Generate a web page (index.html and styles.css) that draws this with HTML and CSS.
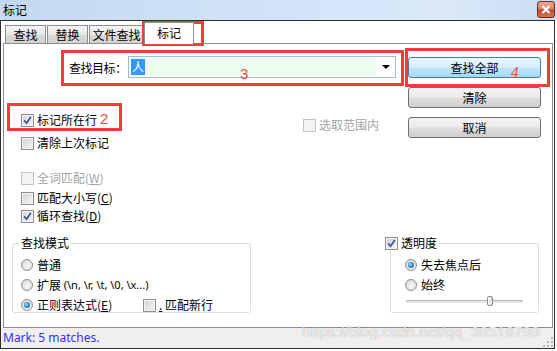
FILE: index.html
```html
<!DOCTYPE html>
<html lang="zh-CN">
<head>
    <meta charset="UTF-8">
    <title>标记</title>
    <link rel="stylesheet" href="styles.css">
</head>
<body>
    <div class="titlebar">
        <span class="title">标记</span>
        <span class="close-btn">
            <svg width="10" height="9" viewBox="0 0 10 9"><path d="M1.5 1 L8.5 8 M8.5 1 L1.5 8" stroke="#fff" stroke-width="2.2"/></svg>
        </span>
    </div>

    <div class="client">
        <div class="tabs">
            <div class="tab">查找</div>
            <div class="tab">替换</div>
            <div class="tab tab-wide">文件查找</div>
            <div class="tab active">标记</div>
        </div>

        <div class="panel">
            <div class="main">
                <div class="left">
                    <div class="search-row">
                        <label>查找目标：</label>
                        <div class="combo">
                            <span class="combo-text"><span class="sel">人</span></span>
                            <span class="arrow"></span>
                        </div>
                    </div>

                    <div class="options">
                        <div class="checks">
                            <div class="opt"><span class="box checked"><svg width="9" height="9" viewBox="0 0 9 9"><path d="M1.2 4.4 L3.6 7.2 L7.8 1" fill="none" stroke="#3b52a6" stroke-width="1.7"/></svg></span>标记所在行</div>
                            <div class="opt opt-2"><span class="box"></span>清除上次标记</div>
                            <div class="opt opt-3 disabled"><span class="box"></span>全词匹配(<u>W</u>)</div>
                            <div class="opt opt-4"><span class="box"></span>匹配大小写(<u>C</u>)</div>
                            <div class="opt opt-5"><span class="box checked"><svg width="9" height="9" viewBox="0 0 9 9"><path d="M1.2 4.4 L3.6 7.2 L7.8 1" fill="none" stroke="#3b52a6" stroke-width="1.7"/></svg></span>循环查找(<u>D</u>)</div>
                        </div>
                        <div class="opt in-sel disabled"><span class="box"></span>选取范围内</div>
                    </div>
                </div>

                <div class="buttons">
                    <div class="btn default">查找全部</div>
                    <div class="btn">清除</div>
                    <div class="btn">取消</div>
                </div>
            </div>

            <div class="groups">
                <div class="group mode">
                    <span class="group-title">查找模式</span>
                    <div class="opt"><span class="radio"></span>普通</div>
                    <div class="opt"><span class="radio"></span>扩展&nbsp;<span class="latin">(\n, \r, \t, \0, \x...)</span></div>
                    <div class="opt"><span class="radio on"></span><span class="regex-label">正则表达式(<u>E</u>)</span><span class="box"></span><u>.</u>&nbsp;匹配新行</div>
                </div>

                <div class="group trans">
                    <span class="group-title opt"><span class="box checked"><svg width="9" height="9" viewBox="0 0 9 9"><path d="M1.2 4.4 L3.6 7.2 L7.8 1" fill="none" stroke="#3b52a6" stroke-width="1.7"/></svg></span>透明度</span>
                    <div class="opt"><span class="radio on"></span>失去焦点后</div>
                    <div class="opt"><span class="radio"></span>始终</div>
                    <div class="slider"><span class="thumb"></span></div>
                </div>
            </div>
        </div>

        <div class="status">Mark: 5 matches.</div>
    </div>

    <!-- watermark and red annotations drawn over the dialog -->
    <div class="watermark">https://blog.csdn.net/qq_38516799</div>
    <svg class="grip" width="10" height="10" viewBox="0 0 10 10">
        <rect x="8" y="0" width="2" height="2" fill="#b8b8b8"/>
        <rect x="4" y="4" width="2" height="2" fill="#b8b8b8"/>
        <rect x="8" y="4" width="2" height="2" fill="#b8b8b8"/>
        <rect x="0" y="8" width="2" height="2" fill="#b8b8b8"/>
        <rect x="4" y="8" width="2" height="2" fill="#b8b8b8"/>
        <rect x="8" y="8" width="2" height="2" fill="#b8b8b8"/>
    </svg>

    <div class="mark mark-1"></div>
    <div class="mark mark-2"></div>
    <div class="mark mark-3"></div>
    <div class="mark mark-4"></div>
    <span class="num num-1">1</span>
    <span class="num num-2">2</span>
    <span class="num num-3">3</span>
    <span class="num num-4">4</span>
</body>
</html>
```

FILE: styles.css
```css
body {
    margin: 0;
    width: 557px;
    height: 351px;
    position: relative;
    overflow: hidden;
    background-color: #fff;
    font-family: "Noto Sans CJK SC", "Noto Sans", sans-serif;
    font-size: 12px;
    color: #000;
}
.titlebar {
    height: 20px;
    display: flex;
    justify-content: space-between;
    background: linear-gradient(to right, #c3d9f1, #d3e5f8 55%, #dbe9f9 80%, #c9dcf2);
}
.title {
    margin-left: 3px;
    line-height: 19px;
}
.close-btn {
    width: 18px;
    height: 17px;
    margin: 1px 2px 0 0;
    box-sizing: border-box;
    border: 1px solid #6e2d1f;
    border-radius: 3px;
    display: flex;
    align-items: center;
    justify-content: center;
    background: linear-gradient(#e9a490, #d88468 45%, #c24a2d 55%, #d27552);
}
.client {
    width: 555px;
    height: 329px;
    box-sizing: border-box;
    border: 1px solid #2e2e2e;
}
.tabs {
    height: 22px;
    display: flex;
    align-items: flex-end;
    padding-left: 4px;
}
.tab {
    width: 41px;
    height: 18px;
    box-sizing: border-box;
    margin-right: 1px;
    border: 1px solid #8c8e94;
    border-bottom: none;
    background: linear-gradient(#f4f4f4, #e8e8e8 50%, #d9d9d9 51%, #d2d2d2);
    text-align: center;
    line-height: 17px;
}
.tab-wide {
    width: 55px;
    margin-right: 0;
}
.tab.active {
    width: 50px;
    height: 22px;
    margin-bottom: -1px;
    position: relative;
    z-index: 1;
    background: #fff;
    line-height: 20px;
}
.panel {
    height: 285px;
    margin: 0 1px 0 2px;
    box-sizing: border-box;
    border: 1px solid #898c95;
}
.main {
    height: 199px;
    display: flex;
}
.left {
    width: 403px;
}
.search-row {
    margin-top: 12px;
    height: 22px;
    padding-left: 65px;
    display: flex;
    align-items: center;
}
.search-row label {
    width: 59px;
    flex-shrink: 0;
    white-space: nowrap;
    letter-spacing: -0.5px;
}
.combo {
    width: 268px;
    height: 22px;
    flex-shrink: 0;
    box-sizing: border-box;
    border: 1px solid #9dbfdb;
    display: flex;
    background: #fff;
}
.combo-text {
    flex: 1;
    margin: 1px 0 1px 2px;
    background: #edfdf0;
    display: flex;
    align-items: center;
}
.sel {
    height: 16px;
    padding: 0 1px;
    line-height: 16px;
    background: #3399ff;
    color: #fff;
}
.arrow {
    width: 19px;
    display: flex;
    align-items: center;
    justify-content: center;
}
.arrow::after {
    content: "";
    border-left: 4px solid transparent;
    border-right: 4px solid transparent;
    border-top: 4px solid #000;
}
.options {
    display: flex;
    margin-top: 34px;
    padding-left: 17px;
}
.checks {
    width: 282px;
}
.opt {
    height: 16px;
    display: flex;
    align-items: center;
    line-height: 16px;
    white-space: nowrap;
}
.opt-2 { margin-top: 7px; }
.opt-3 { margin-top: 19px; }
.opt-4 { margin-top: 4px; }
.opt-5 { margin-top: 2px; }
.in-sel {
    margin-top: 5px;
}
.disabled {
    color: #a3a3a3;
}
.box {
    width: 13px;
    height: 13px;
    box-sizing: border-box;
    margin-right: 3px;
    border: 1px solid #8e8f8f;
    box-shadow: inset 0 0 0 1px #f4f4f4;
    background: linear-gradient(135deg, #d2d2d2, #f6f6f6);
    display: flex;
    align-items: center;
    justify-content: center;
    flex-shrink: 0;
}
.disabled .box {
    border-color: #c3c3c3;
    background: #f4f4f4;
}
.radio {
    width: 12px;
    height: 12px;
    box-sizing: border-box;
    margin-right: 4px;
    border: 1px solid #8e8f8f;
    border-radius: 50%;
    background: radial-gradient(circle at 60% 60%, #f6f6f6, #d0d0d0);
    display: flex;
    align-items: center;
    justify-content: center;
    flex-shrink: 0;
}
.radio.on::after {
    content: "";
    width: 6px;
    height: 6px;
    border-radius: 50%;
    background: radial-gradient(circle at 40% 40%, #8fe0ff, #2a86d0 55%, #124f94);
}
.buttons {
    width: 133px;
    margin-left: 1px;
    padding-top: 13px;
    display: flex;
    flex-direction: column;
    gap: 9px;
}
.btn {
    height: 21px;
    box-sizing: border-box;
    border: 1px solid #707070;
    border-radius: 3px;
    background: linear-gradient(#f2f2f2, #ebebeb 48%, #dddddd 52%, #cfcfcf);
    text-align: center;
    line-height: 19px;
}
.btn.default {
    border-color: #3c7fb1;
    background: linear-gradient(#eaf6fd, #d9f0fc 48%, #bee6fd 52%, #a7d9f5);
}
.groups {
    height: 70px;
    padding-left: 8px;
    display: flex;
}
.group {
    position: relative;
    height: 70px;
    box-sizing: border-box;
    border: 1px solid #d5dfe5;
    border-radius: 3px;
    padding-top: 11px;
}
.group .opt {
    height: 20px;
}
.group-title {
    position: absolute;
    top: -8px;
    left: 6px;
    padding: 0 2px;
    line-height: 14px;
    background: #fff;
}
.mode {
    width: 239px;
    padding-left: 8px;
}
.latin {
    font-family: "Noto Sans", sans-serif;
    font-size: 11px;
}
.regex-label {
    width: 106px;
}
.trans {
    width: 149px;
    margin-left: 139px;
    padding-left: 14px;
}
.trans .group-title {
    left: -6px;
    height: 14px;
    padding: 0 2px 0 0;
}
.slider {
    position: relative;
    width: 117px;
    height: 3px;
    margin: 5px 0 0 1px;
    box-sizing: border-box;
    border-top: 1px solid #b4b4b4;
    background: #e6e8e8;
}
.thumb {
    position: absolute;
    left: 81px;
    top: -5px;
    width: 6px;
    height: 10px;
    box-sizing: border-box;
    border: 1px solid #8b8b8b;
    border-radius: 2px;
    background: linear-gradient(to right, #fff, #dcdcdc);
}
.status {
    height: 20px;
    padding-left: 2px;
    background: #f0eeee;
    color: #3030ff;
    font-family: "Noto Sans", sans-serif;
    font-size: 12px;
    line-height: 20px;
}
.watermark {
    position: absolute;
    left: 302px;
    top: 323px;
    font-family: "Liberation Sans", sans-serif;
    font-size: 15.5px;
    color: rgba(255, 255, 255, 0.85);
    text-shadow: 0 0 1px rgba(0, 0, 0, 0.4);
}
.grip {
    position: absolute;
    left: 543px;
    top: 337px;
}
.mark {
    position: absolute;
    box-sizing: border-box;
    border: 3px solid #f33b3b;
}
.mark-1 { left: 142px; top: 21px; width: 62px; height: 25px; }
.mark-2 { left: 7px; top: 103px; width: 115px; height: 28px; }
.mark-3 { left: 61px; top: 50px; width: 343px; height: 36px; }
.mark-4 { left: 405px; top: 48px; width: 145px; height: 39px; }
.num {
    position: absolute;
    color: #f24a44;
    font-family: "Liberation Sans", sans-serif;
    font-size: 15px;
    line-height: 15px;
}
.num-1 { left: 185px; top: 29px; font-size: 14px; }
.num-2 { left: 100px; top: 111px; }
.num-3 { left: 240px; top: 66px; }
.num-4 { left: 511px; top: 65px; font-family: "Liberation Serif", serif; font-style: italic; }
```
